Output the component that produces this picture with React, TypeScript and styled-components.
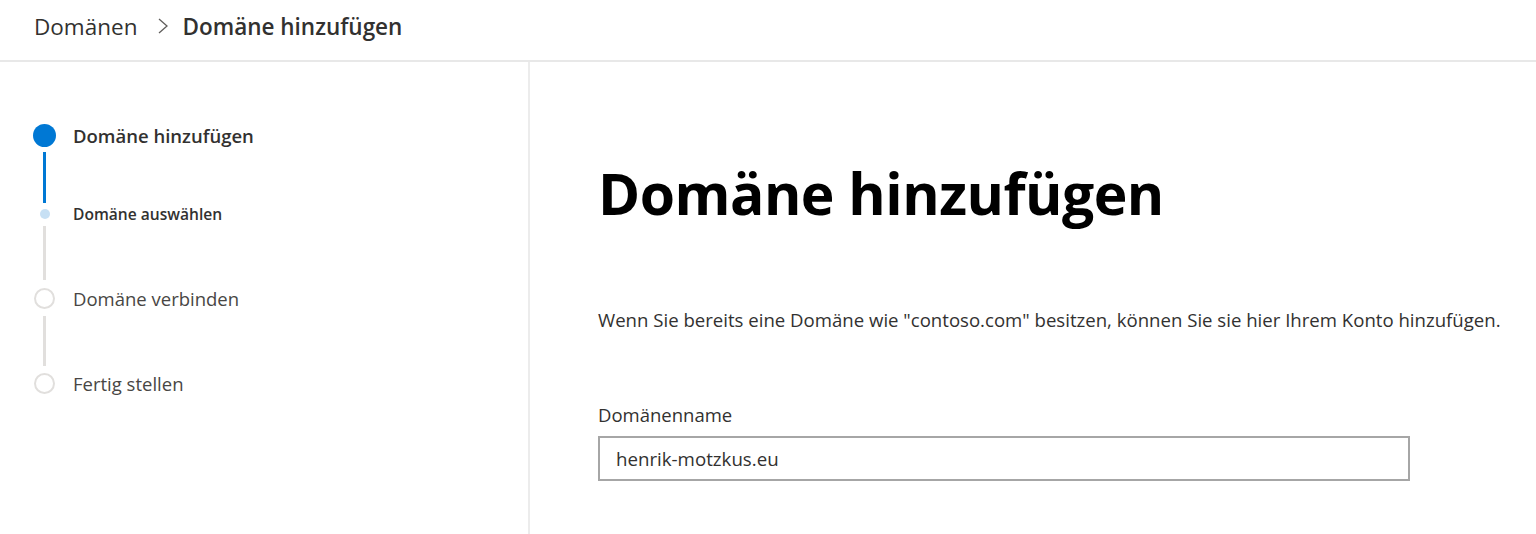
import React from "react";
import styled, { createGlobalStyle } from "styled-components";

const GlobalStyle = createGlobalStyle`
  html, body { margin: 0; padding: 0; background: #ffffff; }
  body { font-family: "Open Sans", "Noto Sans", sans-serif; color: #323130; }
  * { box-sizing: border-box; }
`;

const Page = styled.div`
  display: flex;
  flex-direction: column;
  width: 1536px;
  height: 534px;
  overflow: hidden;
  background: #fff;
`;

const Header = styled.header`
  height: 62px;
  flex: none;
  display: flex;
  align-items: center;
  padding: 0 0 8px 34px;
  border-bottom: 2px solid #e8e8e8;
`;

const Crumb = styled.span<{ $current?: boolean }>`
  font-size: 22.5px;
  font-weight: ${(p) => (p.$current ? 600 : 400)};
  color: #323130;
  white-space: nowrap;
`;

const Chevron = styled.svg`
  width: 12px;
  height: 18px;
  margin: 0 13px 0 20px;
`;

const Body = styled.div`
  flex: 1;
  display: flex;
`;

const Sidebar = styled.nav`
  width: 530px;
  flex: none;
  border-right: 2px solid #ececec;
  padding: 62px 0 0 33px;
  display: flex;
  flex-direction: column;
`;

const StepRow = styled.div<{ $h: number }>`
  height: ${(p) => p.$h}px;
  display: flex;
  align-items: center;
`;

const MarkerCell = styled.div`
  width: 23px;
  display: flex;
  justify-content: center;
  align-items: center;
  flex: none;
`;

const Dot = styled.span<{ $size: number; $fill: string; $ring?: string }>`
  width: ${(p) => p.$size}px;
  height: ${(p) => p.$size}px;
  border-radius: 50%;
  background: ${(p) => p.$fill};
  border: ${(p) => (p.$ring ? `2px solid ${p.$ring}` : "none")};
`;

const StepLabel = styled.span<{ $small?: boolean; $strong?: boolean }>`
  margin-left: 17px;
  font-size: ${(p) => (p.$small ? "15.6px" : "18.5px")};
  font-weight: ${(p) => (p.$strong ? 600 : 400)};
  color: ${(p) => (p.$strong ? "#323130" : "#484644")};
  white-space: nowrap;
`;

const Connector = styled.div<{ $top: number; $len: number; $bottom: number; $color: string }>`
  width: 3px;
  height: ${(p) => p.$len}px;
  margin: ${(p) => `${p.$top}px 0 ${p.$bottom}px 10px`};
  background: ${(p) => p.$color};
`;

const Content = styled.main`
  flex: 1;
  padding: 0 0 0 68px;
  display: flex;
  flex-direction: column;
`;

const Title = styled.h1`
  margin: 93px 0 0;
  font-size: 57px;
  line-height: 76px;
  font-weight: 700;
  color: #000;
  letter-spacing: -0.5px;
  white-space: nowrap;
`;

const Intro = styled.p`
  margin: 76px 0 0;
  font-size: 18.6px;
  line-height: 26px;
  color: #323130;
  white-space: nowrap;
`;

const FieldLabel = styled.label`
  margin-top: 69px;
  font-size: 18.5px;
  line-height: 26px;
  color: #323130;
`;

const Input = styled.input`
  margin-top: 8px;
  width: 812px;
  height: 45px;
  border: 2px solid #a6a6a6;
  padding: 0 16px;
  font-family: inherit;
  font-size: 18.7px;
  color: #323130;
  background: #fff;
  outline: none;
`;

export default function App() {
  return (
    <>
      <GlobalStyle />
      <Page>
        <Header>
          <Crumb>Domänen</Crumb>
          <Chevron viewBox="0 0 12 18" fill="none">
            <path d="M2 2 L10 9 L2 16" stroke="#605e5c" strokeWidth="1.3" />
          </Chevron>
          <Crumb $current>Domäne hinzufügen</Crumb>
        </Header>
        <Body>
          <Sidebar>
            <StepRow $h={23}>
              <MarkerCell>
                <Dot $size={23} $fill="#0078d4" />
              </MarkerCell>
              <StepLabel $strong>Domäne hinzufügen</StepLabel>
            </StepRow>
            <Connector $top={5} $len={51} $bottom={6} $color="#0078d4" />
            <StepRow $h={10}>
              <MarkerCell>
                <Dot $size={10} $fill="#c7e0f4" />
              </MarkerCell>
              <StepLabel $small $strong>Domäne auswählen</StepLabel>
            </StepRow>
            <Connector $top={7} $len={54} $bottom={8} $color="#e1dfdd" />
            <StepRow $h={21}>
              <MarkerCell>
                <Dot $size={21} $fill="#fff" $ring="#e1dfdd" />
              </MarkerCell>
              <StepLabel>Domäne verbinden</StepLabel>
            </StepRow>
            <Connector $top={7} $len={50} $bottom={7} $color="#e1dfdd" />
            <StepRow $h={21}>
              <MarkerCell>
                <Dot $size={21} $fill="#fff" $ring="#e1dfdd" />
              </MarkerCell>
              <StepLabel>Fertig stellen</StepLabel>
            </StepRow>
          </Sidebar>
          <Content>
            <Title>Domäne hinzufügen</Title>
            <Intro>
              Wenn Sie bereits eine Domäne wie "contoso.com" besitzen, können Sie sie hier Ihrem Konto hinzufügen.
            </Intro>
            <FieldLabel htmlFor="domain">Domänenname</FieldLabel>
            <Input id="domain" defaultValue="henrik-motzkus.eu" />
          </Content>
        </Body>
      </Page>
    </>
  );
}
